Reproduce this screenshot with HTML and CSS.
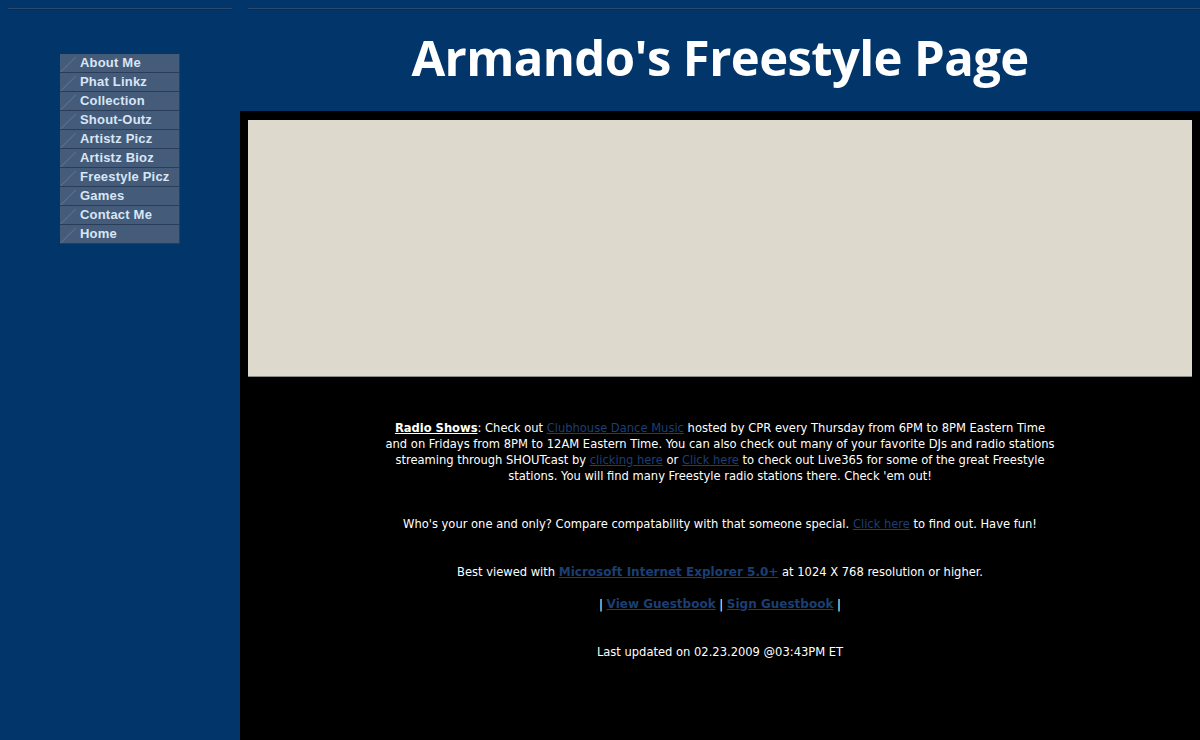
FILE: index.html
```html
<!DOCTYPE html>
<html>
<head>
<meta charset="utf-8">
<title>Armando's Freestyle Page</title>
<link rel="stylesheet" href="styles.css">
</head>
<body>
<div class="page">
  <aside class="sidebar">
    <div class="rule"></div>
    <nav class="menu">
      <a class="btn" href="#">About Me</a>
      <a class="btn" href="#">Phat Linkz</a>
      <a class="btn" href="#">Collection</a>
      <a class="btn" href="#">Shout-Outz</a>
      <a class="btn" href="#">Artistz Picz</a>
      <a class="btn" href="#">Artistz Bioz</a>
      <a class="btn" href="#">Freestyle Picz</a>
      <a class="btn" href="#">Games</a>
      <a class="btn" href="#">Contact Me</a>
      <a class="btn" href="#">Home</a>
    </nav>
  </aside>
  <main class="main">
    <header class="header">
      <div class="rule"></div>
      <h1 class="title">Armando's Freestyle Page</h1>
    </header>
    <section class="content">
      <div class="banner"></div>
      <div class="text">
        <p class="para"><b class="u">Radio Shows</b>: Check out <a class="lnk" href="#">Clubhouse Dance Music</a> hosted by CPR every Thursday from 6PM to 8PM Eastern Time and on Fridays from 8PM to 12AM Eastern Time. You can also check out many of your favorite DJs and radio stations streaming through SHOUTcast by <a class="lnk" href="#">clicking here</a> or <a class="lnk" href="#">Click here</a> to check out Live365 for some of the great Freestyle stations. You will find many Freestyle radio stations there. Check 'em out!</p>
        <p class="line l2">Who's your one and only? Compare compatability with that someone special. <a class="lnk" href="#">Click here</a> to find out. Have fun!</p>
        <p class="line l3">Best viewed with <a class="lnk wide" href="#">Microsoft Internet Explorer 5.0+</a> at 1024 X 768 resolution or higher.</p>
        <p class="line l4">| <a class="lnk wide" href="#">View Guestbook</a> | <a class="lnk wide" href="#">Sign Guestbook</a> |</p>
        <p class="line l5">Last updated on 02.23.2009 @03:43PM ET</p>
      </div>
    </section>
  </main>
</div>
</body>
</html>
```
FILE: styles.css
```css
html, body {
  margin: 0;
  padding: 0;
  height: 100%;
}
body {
  background: #02356a;
  font-family: "DejaVu Sans Condensed", "Liberation Sans", sans-serif;
  overflow: hidden;
}
.page {
  display: flex;
  height: 740px;
}
.sidebar {
  width: 240px;
  flex: none;
  padding: 8px 8px 0 8px;
  box-sizing: border-box;
}
.rule {
  height: 1px;
  background: #2a4a70;
  border-bottom: 1px solid #0b2a52;
}
.menu {
  display: flex;
  flex-direction: column;
  width: 120px;
  margin: 44px 0 0 52px;
}
.btn {
  position: relative;
  display: block;
  height: 19px;
  line-height: 18px;
  width: 120px;
  padding-left: 20px;
  box-sizing: border-box;
  background: #445b7a;
  border-bottom: 1px solid #2a3d58;
  border-right: 1px solid #2c3f5a;
  color: #d8e6f6;
  font-family: "Liberation Sans", sans-serif;
  font-weight: bold;
  font-size: 13px;
  letter-spacing: 0.2px;
  text-decoration: none;
  overflow: hidden;
}
.btn::before {
  content: "";
  position: absolute;
  left: 0;
  top: 18px;
  width: 22px;
  height: 1px;
  background: #5b7292;
  transform-origin: 0 0;
  transform: rotate(-45deg);
}
.main {
  flex: 1;
  display: flex;
  flex-direction: column;
}
.header {
  height: 111px;
  padding: 8px 0 0 8px;
  box-sizing: border-box;
}
.title {
  margin: 16px 0 0 -8px;
  text-align: center;
  color: #fff;
  font-family: "Open Sans", sans-serif;
  font-weight: bold;
  font-size: 49px;
  line-height: 62px;
  letter-spacing: -0.6px;
}
.content {
  flex: 1;
  background: #000;
  padding: 9px 8px 0 8px;
}
.banner {
  height: 256px;
  background: #ded9cd;
  border-bottom: 1px solid #8f8b84;
}
.text {
  width: 674px;
  margin: 0 auto;
  color: #fff;
  font-size: 12.8px;
  line-height: 16px;
  text-align: center;
}
.para {
  margin: 43px 0 0 0;
}
.line {
  margin: 0;
}
.l2 { margin-top: 32px; }
.l3 { margin-top: 32px; }
.l4 { margin-top: 16px; }
.l5 { margin-top: 32px; }
.u {
  text-decoration: underline;
}
.lnk {
  color: #1b3f74;
  text-decoration: underline;
}
.wide {
  font-family: "DejaVu Sans", sans-serif;
  font-weight: bold;
  font-size: 12px;
}
```
